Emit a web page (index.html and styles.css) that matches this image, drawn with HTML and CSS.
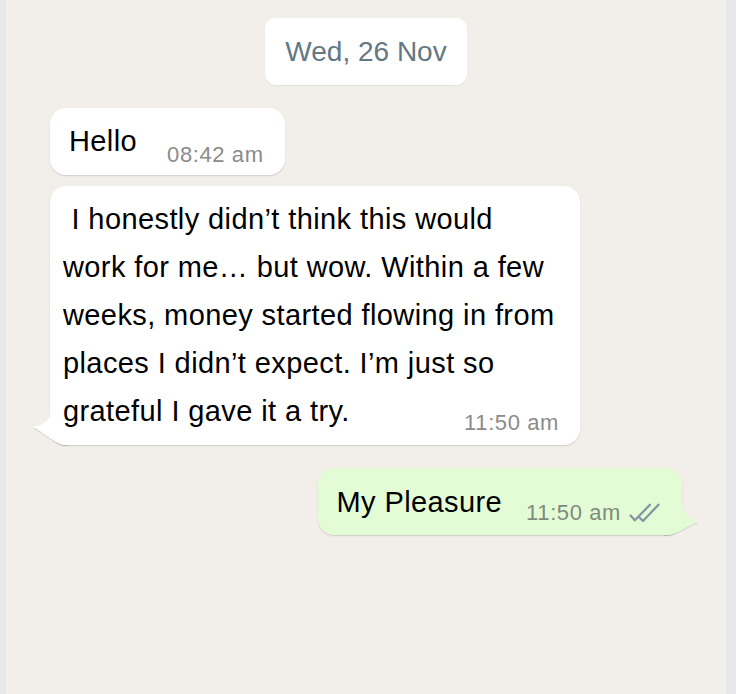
FILE: index.html
```html
<!DOCTYPE html>
<html lang="en">
<head>
<meta charset="utf-8">
<title>Chat</title>
<link rel="stylesheet" href="styles.css">
</head>
<body>
<div class="app">
  <div class="rail rail-left"></div>
  <main class="chat">
    <div class="date-pill">Wed, 26 Nov</div>

    <div class="bubble in hello">
      <p class="text">Hello<span class="meta">08:42 am</span></p>
    </div>

    <div class="bubble in long">
      <p class="text">&nbsp;I honestly didn’t think this would work for me… but wow. Within a few weeks, money started flowing in from places I didn’t expect. I’m just so grateful I gave it a try.<span class="meta">11:50 am</span></p>
      <svg class="tail tail-in" width="36" height="30" viewBox="0 0 36 30" aria-hidden="true"><path d="M18 0 C17 6 11 10 1 12 C9 16 17 24 30 30 L36 30 L36 0 Z"/></svg>
    </div>

    <div class="bubble out">
      <p class="text">My Pleasure<span class="meta">11:50 am<svg class="ticks" width="32" height="22" viewBox="0 0 32 22" aria-hidden="true"><path d="M2.5 13.5 L6.8 18.3 L22 2.7 M11.5 15.5 L15 19 L30.5 2.7"/></svg></span></p>
      <svg class="tail tail-out" width="36" height="30" viewBox="0 0 36 30" aria-hidden="true"><path d="M18 0 C19 8 25 14 34 17 C26 20 18 26 6 30 L0 30 L0 0 Z"/></svg>
    </div>
  </main>
  <div class="rail rail-right"></div>
</div>
</body>
</html>
```

FILE: styles.css
```css
* { box-sizing: border-box; }

html, body {
  margin: 0;
  padding: 0;
  height: 100%;
}

body {
  background: #f2efea;
  font-family: "Liberation Sans", Arial, Helvetica, sans-serif;
  color: #000;
}

.app {
  display: flex;
  height: 694px;
  overflow: hidden;
}

.rail-left {
  width: 6px;
  background: #e8e8e8;
}

.rail-right {
  width: 10px;
  background: #e7e7e9;
}

.chat {
  flex: 1;
  display: flex;
  flex-direction: column;
  align-items: flex-start;
  padding: 18px 44px 0 44px;
  background: #f2efea;
}

.date-pill {
  align-self: center;
  height: 67px;
  line-height: 67px;
  padding: 0 20px;
  background: #fff;
  border-radius: 11px;
  color: #637884;
  font-size: 28px;
  box-shadow: 0 1px 1px rgba(0, 0, 0, 0.06);
  margin-bottom: 23px;
}

.bubble {
  position: relative;
  isolation: isolate;
  background: #fff;
  border-radius: 16px;
  box-shadow: 0 1px 1.5px rgba(0, 0, 0, 0.14);
}

.text {
  margin: 0;
  font-size: 29px;
  line-height: 48px;
  letter-spacing: 0.4px;
  color: #000;
}

.meta {
  float: right;
  display: flex;
  align-items: center;
  gap: 7px;
  height: 24px;
  font-size: 22px;
  letter-spacing: 0.6px;
  line-height: 24px;
  color: #8b8b8b;
}

.hello {
  padding: 9px 21px 10px 19px;
  margin-bottom: 11px;
}

.hello .meta {
  margin: 26px 0 -26px 30px;
}

.long {
  max-width: 530px;
  padding: 9px 21px 10px 13px;
  margin-bottom: 23px;
}

.long .meta {
  margin: 24px 0 -24px 26px;
}

.out {
  align-self: flex-end;
  background: #e4fcd6;
  padding: 10px 22px 9px 19px;
}

.out .meta {
  color: #7f8b7e;
  margin: 23px 0 -23px 24px;
}

.ticks {
  display: block;
  fill: none;
  stroke: #8696a0;
  stroke-width: 2.3;
  stroke-linecap: round;
  stroke-linejoin: round;
}

.tail {
  position: absolute;
  bottom: 0;
  z-index: -1;
  filter: drop-shadow(0 1px 0.6px rgba(0, 0, 0, 0.13));
}

.tail-in {
  left: -18px;
  fill: #fff;
}

.tail-out {
  right: -18px;
  fill: #e4fcd6;
}
```
